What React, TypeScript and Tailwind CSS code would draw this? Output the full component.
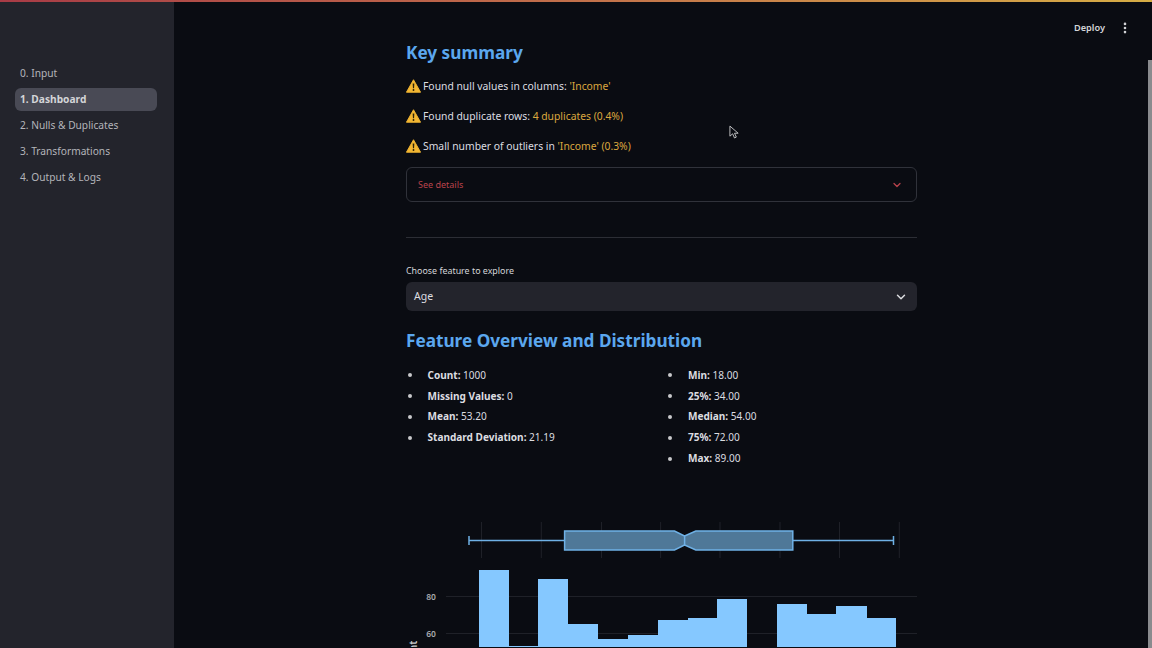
import { ChevronDown, EllipsisVertical } from 'lucide-react'

const navItems = ['0. Input', '1. Dashboard', '2. Nulls & Duplicates', '3. Transformations', '4. Output & Logs']

const statsLeft = [
  ['Count:', '1000'],
  ['Missing Values:', '0'],
  ['Mean:', '53.20'],
  ['Standard Deviation:', '21.19'],
]

const statsRight = [
  ['Min:', '18.00'],
  ['25%:', '34.00'],
  ['Median:', '54.00'],
  ['75%:', '72.00'],
  ['Max:', '89.00'],
]

// left edge, right edge, top of each histogram bar, in chart coordinates
const bars = [
  [73, 102.5, 53],
  [102.5, 132.3, 129],
  [132.3, 162, 62],
  [162, 191.8, 106.5],
  [191.8, 221.5, 121.5],
  [221.5, 252, 117.5],
  [252, 281.7, 102.5],
  [281.7, 311.4, 100.5],
  [311.4, 341.2, 81.5],
  [371, 400.7, 87],
  [400.7, 430.4, 96.5],
  [430.4, 460.9, 89],
  [460.9, 490.3, 100.5],
]

const gridX = [75.5, 135.3, 195.5, 254.6, 314, 374, 433.5, 493.3]

function WarningIcon() {
  return (
    <svg viewBox="0 0 16 15" className="mb-[2px] h-[14px] w-[15px] shrink-0">
      <path d="M8 .8 15.6 14.2H.4Z" fill="#f2b632" stroke="#f2b632" strokeLinejoin="round" />
      <path d="M7.1 4.8h1.8l-.3 5.2H7.4Z" fill="#2a2008" />
      <circle cx="8" cy="11.8" r="1" fill="#2a2008" />
    </svg>
  )
}

function Warning({ text, accent }: { text: string; accent: string }) {
  return (
    <div className="flex h-[30px] items-center gap-[2px]">
      <WarningIcon />
      <p className="text-[10.35px] text-[#dcdde0]">
        {text} <span className="text-[#dba73f]">{accent}</span>
      </p>
    </div>
  )
}

function StatList({ rows }: { rows: string[][] }) {
  return (
    <ul className="flex flex-col">
      {rows.map(([name, value]) => (
        <li key={name} className="flex h-[20.8px] items-center text-[10.05px] text-[#dcdde0]">
          <span className="mr-[16px] ml-[1.5px] h-[4px] w-[4px] rounded-full bg-[#c8c9cc]" />
          <p>
            <b className="font-bold">{name}</b> {value}
          </p>
        </li>
      ))}
    </ul>
  )
}

function Chart() {
  return (
    <svg viewBox="0 0 511 130" className="block h-[130px] w-[511px] overflow-hidden">
      {gridX.map((x) => (
        <line key={x} x1={x} x2={x} y1="5" y2="41" stroke="#1f2128" strokeWidth="1" />
      ))}
      <line x1="63" x2="487.5" y1="23.5" y2="23.5" stroke="#6fb1e6" strokeWidth="1.5" />
      <line x1="63" x2="63" y1="19" y2="28" stroke="#6fb1e6" strokeWidth="1.5" />
      <line x1="487.5" x2="487.5" y1="19" y2="28" stroke="#6fb1e6" strokeWidth="1.5" />
      <path
        d="M158.6 14H268.5L278.6 19V28L268.5 33H158.6ZM278.6 19 289.8 14H386.8V33H289.8L278.6 28Z"
        fill="#4f7898"
        stroke="#6fb1e6"
        strokeWidth="1.5"
      />
      <line x1="40" x2="511" y1="79.5" y2="79.5" stroke="#1f2128" />
      <line x1="40" x2="511" y1="116.5" y2="116.5" stroke="#1f2128" />
      <text x="25" y="82.5" textAnchor="middle" fontSize="8.5" fontWeight="600" fill="#a8a9ad">80</text>
      <text x="25" y="119.5" textAnchor="middle" fontSize="8.5" fontWeight="600" fill="#a8a9ad">60</text>
      <text transform="translate(11 153) rotate(-90)" fontSize="10" fill="#c8c9cc" fontWeight="600">Count</text>
      {bars.map(([left, right, top]) => (
        <rect key={left} x={left} y={top} width={right - left} height={130 - top} fill="#85c8ff" shapeRendering="crispEdges" />
      ))}
    </svg>
  )
}

export default function App() {
  return (
    <div className="relative flex h-[648px] w-[1152px] overflow-hidden bg-[#0a0c12] font-['Noto_Sans',sans-serif] text-[10.5px]">
      <div className="absolute inset-x-0 top-0 z-10 h-[2px] bg-gradient-to-r from-[#a83b46] via-[#c2704a] to-[#d6ad45]" />

      <aside className="flex w-[174px] shrink-0 flex-col gap-[3px] bg-[#23242c] pt-[62px] pr-[17px] pl-[15px] text-[10.2px]">
        {navItems.map((item) => (
          <div
            key={item}
            className={
              item === '1. Dashboard'
                ? 'flex h-[23px] items-center rounded-[6px] bg-[#494a55] px-[5px] font-bold text-[#d4d5d8]'
                : 'flex h-[23px] items-center rounded-[6px] px-[5px] text-[#b4b5ba]'
            }
          >
            {item}
          </div>
        ))}
      </aside>

      <main className="relative flex-1">
        <header className="absolute top-[21px] right-[20px] flex items-center gap-[13px] text-[9.2px] text-[#d4d5d8]">
          <span className="font-semibold">Deploy</span>
          <EllipsisVertical size={14} strokeWidth={2.5} />
        </header>
        <div className="absolute top-[60px] right-0 h-[588px] w-[4px] bg-[#8a8b8e]" />

        <div className="ml-[232px] flex w-[511px] flex-col pt-[40px]">
          <h1 className="text-[17.2px] leading-[26px] font-bold text-[#5ba7ee]">Key summary</h1>

          <div className="mt-[6px] flex flex-col">
            <Warning text="Found null values in columns:" accent="'Income'" />
            <Warning text="Found duplicate rows:" accent="4 duplicates (0.4%)" />
            <Warning text="Small number of outliers in" accent="'Income' (0.3%)" />
          </div>

          <div className="mt-[5px] flex h-[35px] items-center justify-between rounded-[6px] border border-[#30323a] pr-[13px] pl-[11px] text-[9px] text-[#b8434c]">
            See details
            <ChevronDown size={12} strokeWidth={2.5} />
          </div>

          <hr className="mt-[35px] border-[#2c2e35]" />

          <label className="mt-[26px] text-[8.9px] leading-[13px] text-[#d4d5d8]">Choose feature to explore</label>
          <div className="mt-[5px] flex h-[29px] items-center justify-between rounded-[6px] bg-[#23242c] pr-[9px] pl-[8px] text-[#dcdde0]">
            Age
            <ChevronDown size={14} strokeWidth={2.5} />
          </div>

          <h2 className="mt-[16px] text-[17.2px] leading-[28px] font-bold text-[#5ba7ee]">Feature Overview and Distribution</h2>

          <div className="mt-[10px] grid grid-cols-2 gap-[0px]">
            <StatList rows={statsLeft} />
            <div className="pl-[5px]">
              <StatList rows={statsRight} />
            </div>
          </div>

          <div className="mt-[48px]">
            <Chart />
          </div>
        </div>

        <svg viewBox="0 0 12 16" className="absolute top-[125px] left-[555px] h-[15px] w-[11px]">
          <path d="M1 1v11l3-2.6L6 14l2-1-2-4.2h4Z" fill="#0a0c12" stroke="#c9cacc" strokeWidth="1" />
        </svg>
      </main>
    </div>
  )
}
